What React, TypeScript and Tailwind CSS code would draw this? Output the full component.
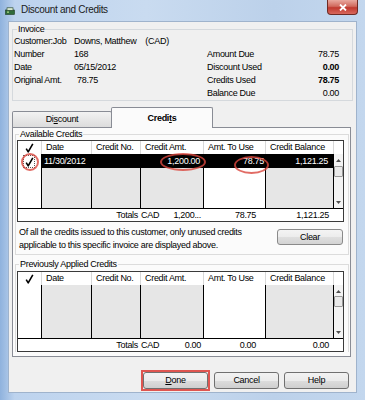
import React from "react";

const cols = "grid-cols-[24px_50px_49px_63px_62px_68px_9px]";

function Check({ className = "" }: { className?: string }) {
  return (
    <svg width="9" height="10" viewBox="0 0 9 10" className={className}>
      <path d="M1.2 5.6 L3.2 8.8 L7.8 0.8" stroke="#000" strokeWidth="1.6" fill="none" strokeLinejoin="round" />
    </svg>
  );
}

function Arrow({ up }: { up?: boolean }) {
  return (
    <svg width="5" height="3" viewBox="0 0 5 3">
      <path d={up ? "M0 3 L2.5 0 L5 3 Z" : "M0 0 L2.5 3 L5 0 Z"} fill="#4d4d4d" />
    </svg>
  );
}

function ScrollBar({ thumbTop }: { thumbTop: string }) {
  return (
    <div className="flex h-full flex-col items-center bg-[#f3f3f3]">
      <div className="mt-[5px]">
        <Arrow up />
      </div>
      <div className={`${thumbTop} h-[11px] w-[9px] rounded-[1px] border border-[#9a9a9a] bg-[#e9e9e9]`} />
      <div className="mt-auto mb-[4px]">
        <Arrow />
      </div>
    </div>
  );
}

type Row = { date: string; amt: string; use: string; bal: string };

function CreditsTable({
  row,
  bodyH,
  totals,
  thumbTop,
}: {
  row?: Row;
  bodyH: string;
  totals: string[];
  thumbTop: string;
}) {
  const bodyCell = "h-full border-r border-black";
  return (
    <div className="relative ml-px w-[327px] border border-[#3a3a3a] bg-white">
      {/* header */}
      <div className={`grid ${cols} h-[13px] items-center`}>
        <div className="flex h-full items-center justify-center border-r border-[#d8d8d8]">
          <Check />
        </div>
        {["Date", "Credit No.", "Credit Amt.", "Amt. To Use", "Credit Balance"].map((h) => (
          <div key={h} className="h-full truncate border-r border-[#d8d8d8] pl-[4px] leading-[13px]">
            {h}
          </div>
        ))}
        <div />
      </div>

      {/* body */}
      <div className={`grid ${cols} ${bodyH}`}>
        <div className={`${bodyCell} bg-white`}>
          {row && (
            <div className="mt-[1px] ml-[5px] flex h-[13px] w-[12px] items-center justify-center border border-dotted border-[#555]">
              <Check />
            </div>
          )}
        </div>
        <div className={`${bodyCell} bg-[#e6e6e6]`}>
          {row && <div className="h-[14px] bg-black pl-[2px] leading-[14px] text-white">{row.date}</div>}
        </div>
        <div className={`${bodyCell} bg-[#e6e6e6]`}>{row && <div className="h-[14px] bg-black" />}</div>
        <div className={`${bodyCell} bg-[#e6e6e6]`}>
          {row && <div className="h-[14px] bg-black pr-[3px] text-right leading-[14px] text-white">{row.amt}</div>}
        </div>
        <div className={`${bodyCell} bg-white`}>
          {row && <div className="h-[14px] bg-black pr-[1px] text-right leading-[14px] text-white">{row.use}</div>}
        </div>
        <div className={`${bodyCell} bg-[#e6e6e6]`}>
          {row && <div className="h-[14px] bg-black pr-[5px] text-right leading-[14px] text-white">{row.bal}</div>}
        </div>
        <ScrollBar thumbTop={thumbTop} />
      </div>

      {/* totals */}
      <div className={`grid ${cols} h-[13px] border-t border-black leading-[13px]`}>
        <div className="col-span-3 pr-[3px] text-right">Totals</div>
        <div className="flex justify-between pr-[3px]">
          <span>CAD</span>
          <span>{totals[0]}</span>
        </div>
        <div className="pr-[10px] text-right">{totals[1]}</div>
        <div className="pr-[5px] text-right">{totals[2]}</div>
        <div />
      </div>

      {row && (
        <>
          <div className="absolute top-[12px] left-[3px] h-[18px] w-[18px] rounded-[50%] border-2 border-[#d9473f]/80" />
          <div className="absolute top-[12px] left-[142px] h-[18px] w-[46px] rounded-[50%] border-2 border-[#d9473f]/80" />
          <div className="absolute top-[15px] left-[216px] h-[18px] w-[35px] rounded-[50%] border-2 border-[#d9473f]/80" />
        </>
      )}
    </div>
  );
}

function WinButton({ children }: { children: React.ReactNode }) {
  return (
    <button className="h-[17px] w-[65px] rounded-[3px] border border-[#707070] bg-[linear-gradient(#f2f2f2_0%,#ebebeb_50%,#dddddd_51%,#cfcfcf_100%)] leading-[15px] text-black">
      {children}
    </button>
  );
}

export default function App() {
  const invoiceLeft = [
    ["Customer:Job", "Downs, Matthew"],
    ["Number", "168"],
    ["Date", "05/15/2012"],
    ["Original Amt.", "78.75"],
  ];
  const invoiceRight = [
    ["Amount Due", "78.75", false],
    ["Discount Used", "0.00", true],
    ["Credits Used", "78.75", true],
    ["Balance Due", "0.00", false],
  ] as const;

  return (
    <div className="flex h-[400px] w-[365px] flex-col bg-[linear-gradient(90deg,#8fb2dd_0%,#bdd3ee_4%,#c9dbf0_40%,#bcd1ea_75%,#c3d7ee_100%)] font-['Liberation_Sans',Arial,sans-serif] text-[9px] tracking-[-0.3px] text-black">
      {/* title bar */}
      <div className="flex h-[21px] shrink-0 items-start">
        <svg width="10" height="8" viewBox="0 0 10 8" className="mt-[7px] ml-[5px]">
          <rect x="0.5" y="3" width="9" height="4.5" fill="#2f6b3a" stroke="#1d3d22" strokeWidth="0.6" />
          <rect x="2" y="0.8" width="6" height="2.6" fill="#d8e8d0" stroke="#1d3d22" strokeWidth="0.6" />
          <rect x="2" y="4.5" width="2" height="1.2" fill="#b5e08a" />
        </svg>
        <div className="mt-[4px] ml-[6px] text-[10px] leading-[12px] text-[#1a1a1a]">Discount and Credits</div>
        <div className="mr-[7px] ml-auto flex h-[15px] w-[31px] items-center justify-center rounded-b-[4px] border border-t-0 border-[#6e2a24] bg-[linear-gradient(#e9a99f_0%,#d16a5e_45%,#c0392f_55%,#d8685c_100%)]">
          <svg width="8" height="7" viewBox="0 0 8 7">
            <path d="M1 0.5 L7 6.5 M7 0.5 L1 6.5" stroke="#fff" strokeWidth="1.8" />
          </svg>
        </div>
      </div>

      {/* dialog body */}
      <div className="ml-[8px] flex h-[372px] w-[349px] flex-col border border-[#9fb3cc] bg-[#f0f0f0]">
        {/* invoice group */}
        <fieldset className="mt-[2px] ml-[3px] w-[341px] border border-[#d5d9dd]">
          <legend className="ml-[4px] px-[1px] leading-[11px]">Invoice</legend>
          <div className="flex">
            <div className="w-[194px] pl-[1px]">
              {invoiceLeft.map(([k, v]) => (
                <div key={k} className="flex h-[13px] items-center">
                  <span className="w-[60px]">{k}</span>
                  <span className={k === "Original Amt." ? "pl-[3px]" : ""}>{v}</span>
                  {k === "Customer:Job" && <span className="ml-[9px]">(CAD)</span>}
                </div>
              ))}
            </div>
            <div className="mt-[13px] w-[132px]">
              {invoiceRight.map(([k, v, b]) => (
                <div key={k} className="flex h-[13px] items-center justify-between">
                  <span>{k}</span>
                  <span className={b ? "font-bold" : ""}>{v}</span>
                </div>
              ))}
            </div>
          </div>
        </fieldset>

        {/* tabs */}
        <div className="mt-[6px] ml-[3px] flex h-[20px] items-end">
          <div className="flex h-[16px] w-[100px] items-center justify-center rounded-t-[2px] border border-b-0 border-[#898c95] bg-[linear-gradient(#f2f2f2,#dcdcdc)]">
            Di<span className="underline">s</span>count
          </div>
          <div className="relative z-10 -mb-px -ml-px flex h-[21px] w-[102px] items-start justify-center rounded-t-[2px] border border-b-0 border-[#898c95] bg-[#fbfbfb] pt-[4px] font-bold">
            Credi<span className="underline">t</span>s
          </div>
        </div>

        {/* tab panel */}
        <div className="ml-[3px] h-[230px] w-[339px] overflow-hidden border border-[#898c95] bg-[#fbfbfb]">
          <fieldset className="mt-[1px] ml-[2px] w-[334px] border border-[#dcdcdc] pb-[2px]">
            <legend className="ml-[3px] px-[1px] leading-[11px]">Available Credits</legend>
            <CreditsTable
              row={{ date: "11/30/2012", amt: "1,200.00", use: "78.75", bal: "1,121.25" }}
              bodyH="h-[54px]"
              totals={["1,200...", "78.75", "1,121.25"]}
              thumbTop="mt-[4px]"
            />
            <div className="mt-[4px] flex items-start">
              <p className="ml-[3px] w-[250px] leading-[13px]">
                Of all the credits issued to this customer, only unused credits applicable to this specific invoice are
                displayed above.
              </p>
              <div className="mt-[3px] ml-auto mr-[5px]">
                <button className="h-[16px] w-[66px] rounded-[3px] border border-[#8a8a8a] bg-[linear-gradient(#f4f4f4_0%,#ececec_50%,#dfdfdf_51%,#d3d3d3_100%)] leading-[14px]">
                  Clear
                </button>
              </div>
            </div>
          </fieldset>

          <fieldset className="mt-[4px] ml-[2px] w-[334px] border border-b-0 border-[#dcdcdc]">
            <legend className="ml-[3px] px-[1px] leading-[11px]">Previously Applied Credits</legend>
            <div className="mt-[1px]">
              <CreditsTable bodyH="h-[53px]" totals={["0.00", "0.00", "0.00"]} thumbTop="mt-[3px]" />
            </div>
          </fieldset>
        </div>

        {/* buttons */}
        <div className="mt-[15px] mr-[7px] flex justify-end gap-[5px]">
          <div className="mr-px outline-2 outline-[#df5550]">
            <WinButton>
              <span className="underline">D</span>one
            </WinButton>
          </div>
          <WinButton>Cancel</WinButton>
          <WinButton>Help</WinButton>
        </div>
      </div>
    </div>
  );
}
